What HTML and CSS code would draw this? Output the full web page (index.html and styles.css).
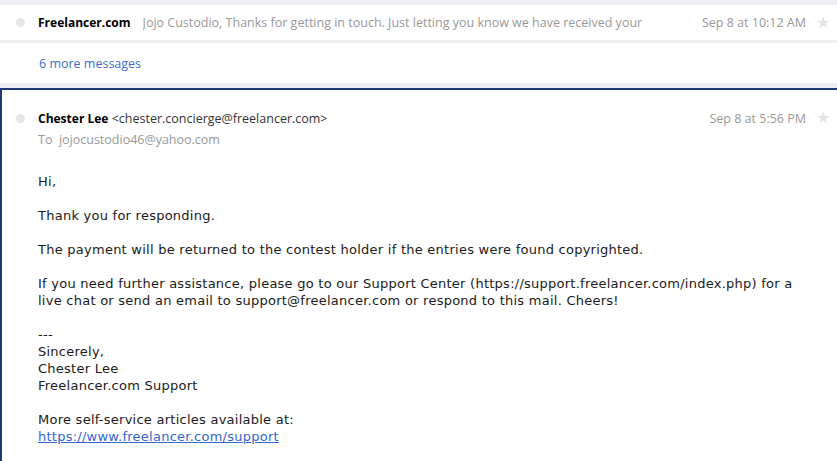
FILE: index.html
```html
<!DOCTYPE html>
<html>
<head>
<meta charset="utf-8">
<link rel="stylesheet" href="styles.css">
</head>
<body>
<div class="thread">
  <div class="row collapsed">
    <span class="dot"></span>
    <span class="sender">Freelancer.com</span>
    <span class="preview">Jojo Custodio, Thanks for getting in touch. Just letting you know we have received your</span>
    <span class="date">Sep 8 at 10:12 AM</span>
    <span class="star">★</span>
  </div>
  <div class="more"><a class="more-link" href="#">6 more messages</a></div>
  <div class="message">
    <div class="row head">
      <span class="dot"></span>
      <div class="from"><span class="sender">Chester Lee</span> <span class="addr">&lt;chester.concierge@freelancer.com&gt;</span></div>
      <span class="date">Sep 8 at 5:56 PM</span>
      <span class="star">★</span>
    </div>
    <div class="to">To&nbsp; jojocustodio46@yahoo.com</div>
    <div class="body">
      <p>Hi,</p>
      <p>Thank you for responding.</p>
      <p>The payment will be returned to the contest holder if the entries were found copyrighted.</p>
      <p>If you need further assistance, please go to our Support Center (https://support.freelancer.com/index.php) for a live chat or send an email to support@freelancer.com or respond to this mail. Cheers!</p>
      <p>---<br>Sincerely,<br>Chester Lee<br>Freelancer.com Support</p>
      <p>More self-service articles available at:<br><a href="#">https://www.freelancer.com/support</a></p>
    </div>
  </div>
</div>
</body>
</html>
```
FILE: styles.css
```css
html, body {
  margin: 0;
  padding: 0;
}
body {
  background: #efeff4;
  font-family: "Open Sans", "Noto Sans", sans-serif;
  font-size: 12.5px;
  color: #333;
  overflow: hidden;
}
.thread {
  padding-top: 5px;
}
.row {
  display: flex;
  align-items: center;
}
.dot {
  flex: none;
  width: 9px;
  height: 9px;
  border-radius: 50%;
  background: #e6e6e6;
  margin-left: 16px;
  margin-right: 13px;
}
.collapsed {
  background: #fff;
  height: 35px;
}
.sender {
  font-weight: 700;
  font-size: 12px;
  color: #000;
  white-space: nowrap;
}
.preview {
  margin-left: 12px;
  color: #999;
  white-space: nowrap;
  overflow: hidden;
  width: 500px;
  flex: none;
}
.date {
  margin-left: auto;
  color: #999;
  white-space: nowrap;
}
.star {
  flex: none;
  width: 14px;
  margin-left: 10px;
  margin-right: 7px;
  color: #e3e3e3;
  font-size: 16px;
  line-height: 16px;
  font-family: "DejaVu Sans", sans-serif;
}
.more {
  background: #fff;
  margin-top: 3px;
  height: 40px;
  display: flex;
  align-items: center;
  padding-left: 39px;
}
.more-link {
  color: #3b6ccc;
  text-decoration: none;
}
.message {
  box-sizing: border-box;
  margin-top: 5px;
  background: #fff;
  border-top: 2px solid #1f3a74;
  border-left: 2px solid #1f3a74;
  padding-top: 18px;
  height: 373px;
  overflow: hidden;
}
.head {
  height: 20px;
}
.head .dot {
  margin-left: 14px;
}
.addr {
  color: #333;
}
.to {
  color: #999;
  padding-left: 36px;
  margin-top: 2px;
  height: 20px;
  line-height: 20px;
}
.body {
  padding: 23px 30px 0 36px;
  font-family: "DejaVu Sans", Verdana, sans-serif;
  font-size: 13px;
  letter-spacing: 0.25px;
  line-height: 17px;
  color: #1a1a1a;
}
.body p {
  margin: 0 0 17px 0;
}
.body a {
  color: #3366cc;
}
```
